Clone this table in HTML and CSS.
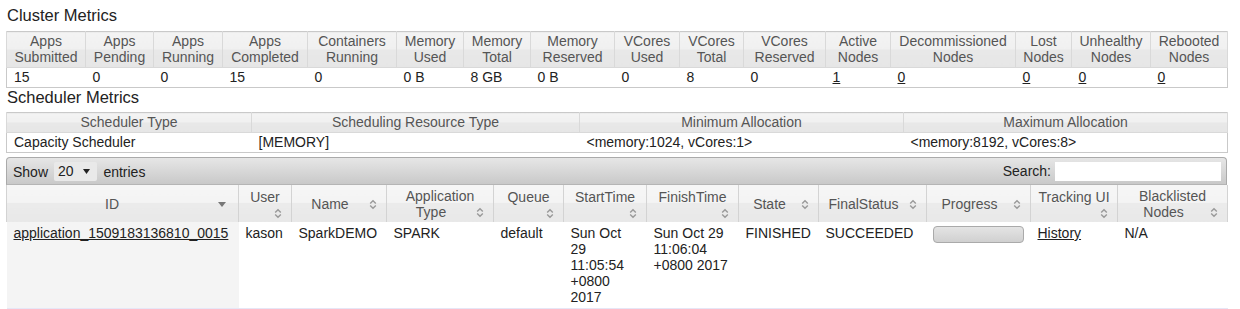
FILE: index.html
```html
<!DOCTYPE html>
<html>
<head>
<meta charset="utf-8">
<title>Applications</title>
<link rel="stylesheet" href="styles.css">
</head>
<body>
<div class="page">
  <h3 class="title title-cluster">Cluster Metrics</h3>
  <table class="info metrics">
    <colgroup>
      <col class="m1"><col class="m2"><col class="m3"><col class="m4"><col class="m5"><col class="m6"><col class="m7"><col class="m8"><col class="m9"><col class="m10"><col class="m11"><col class="m12"><col class="m13"><col class="m14"><col class="m15"><col class="m16">
    </colgroup>
    <thead>
      <tr>
        <th>Apps<br>Submitted</th><th>Apps<br>Pending</th><th>Apps<br>Running</th><th>Apps<br>Completed</th><th>Containers<br>Running</th><th>Memory<br>Used</th><th>Memory<br>Total</th><th>Memory<br>Reserved</th><th>VCores<br>Used</th><th>VCores<br>Total</th><th>VCores<br>Reserved</th><th>Active<br>Nodes</th><th>Decommissioned<br>Nodes</th><th>Lost<br>Nodes</th><th>Unhealthy<br>Nodes</th><th>Rebooted<br>Nodes</th>
      </tr>
    </thead>
    <tbody>
      <tr>
        <td>15</td><td>0</td><td>0</td><td>15</td><td>0</td><td>0 B</td><td>8 GB</td><td>0 B</td><td>0</td><td>8</td><td>0</td><td><a href="#">1</a></td><td><a href="#">0</a></td><td><a href="#">0</a></td><td><a href="#">0</a></td><td><a href="#">0</a></td>
      </tr>
    </tbody>
  </table>

  <h3 class="title title-sched">Scheduler Metrics</h3>
  <table class="info sched">
    <colgroup>
      <col class="s1"><col class="s2"><col class="s3"><col class="s4">
    </colgroup>
    <thead>
      <tr><th>Scheduler Type</th><th>Scheduling Resource Type</th><th>Minimum Allocation</th><th>Maximum Allocation</th></tr>
    </thead>
    <tbody>
      <tr><td>Capacity Scheduler</td><td>[MEMORY]</td><td>&lt;memory:1024, vCores:1&gt;</td><td>&lt;memory:8192, vCores:8&gt;</td></tr>
    </tbody>
  </table>

  <div class="apps">
    <div class="toolbar">
      <div class="length">Show <span class="select">20 <svg class="caret" width="7" height="5" viewBox="0 0 7 5"><path d="M0 0H7L3.5 5Z" fill="#222"/></svg></span> entries</div>
      <label class="search">Search: <input type="text"></label>
    </div>
    <table class="apps-table">
      <colgroup>
        <col class="a1"><col class="a2"><col class="a3"><col class="a4"><col class="a5"><col class="a6"><col class="a7"><col class="a8"><col class="a9"><col class="a10"><col class="a11"><col class="a12">
      </colgroup>
      <thead>
        <tr>
          <th>ID<svg class="sort sort-desc" width="8" height="5" viewBox="0 0 8 5"><path d="M0 0H8L4 5Z" fill="#777"/></svg></th>
          <th>User<svg class="sort" width="8" height="11" viewBox="0 0 8 11"><path d="M1.2 4.6 4 1.8 6.8 4.6M1.2 6.4 4 9.2 6.8 6.4" fill="none" stroke="#999" stroke-width="1.4"/></svg></th>
          <th>Name<svg class="sort" width="8" height="11" viewBox="0 0 8 11"><path d="M1.2 4.6 4 1.8 6.8 4.6M1.2 6.4 4 9.2 6.8 6.4" fill="none" stroke="#999" stroke-width="1.4"/></svg></th>
          <th>Application Type<svg class="sort" width="8" height="11" viewBox="0 0 8 11"><path d="M1.2 4.6 4 1.8 6.8 4.6M1.2 6.4 4 9.2 6.8 6.4" fill="none" stroke="#999" stroke-width="1.4"/></svg></th>
          <th>Queue<svg class="sort" width="8" height="11" viewBox="0 0 8 11"><path d="M1.2 4.6 4 1.8 6.8 4.6M1.2 6.4 4 9.2 6.8 6.4" fill="none" stroke="#999" stroke-width="1.4"/></svg></th>
          <th>StartTime<svg class="sort" width="8" height="11" viewBox="0 0 8 11"><path d="M1.2 4.6 4 1.8 6.8 4.6M1.2 6.4 4 9.2 6.8 6.4" fill="none" stroke="#999" stroke-width="1.4"/></svg></th>
          <th>FinishTime<svg class="sort" width="8" height="11" viewBox="0 0 8 11"><path d="M1.2 4.6 4 1.8 6.8 4.6M1.2 6.4 4 9.2 6.8 6.4" fill="none" stroke="#999" stroke-width="1.4"/></svg></th>
          <th>State<svg class="sort" width="8" height="11" viewBox="0 0 8 11"><path d="M1.2 4.6 4 1.8 6.8 4.6M1.2 6.4 4 9.2 6.8 6.4" fill="none" stroke="#999" stroke-width="1.4"/></svg></th>
          <th>FinalStatus<svg class="sort" width="8" height="11" viewBox="0 0 8 11"><path d="M1.2 4.6 4 1.8 6.8 4.6M1.2 6.4 4 9.2 6.8 6.4" fill="none" stroke="#999" stroke-width="1.4"/></svg></th>
          <th>Progress<svg class="sort" width="8" height="11" viewBox="0 0 8 11"><path d="M1.2 4.6 4 1.8 6.8 4.6M1.2 6.4 4 9.2 6.8 6.4" fill="none" stroke="#999" stroke-width="1.4"/></svg></th>
          <th>Tracking UI<svg class="sort" width="8" height="11" viewBox="0 0 8 11"><path d="M1.2 4.6 4 1.8 6.8 4.6M1.2 6.4 4 9.2 6.8 6.4" fill="none" stroke="#999" stroke-width="1.4"/></svg></th>
          <th>Blacklisted Nodes<svg class="sort" width="8" height="11" viewBox="0 0 8 11"><path d="M1.2 4.6 4 1.8 6.8 4.6M1.2 6.4 4 9.2 6.8 6.4" fill="none" stroke="#999" stroke-width="1.4"/></svg></th>
        </tr>
      </thead>
      <tbody>
        <tr>
          <td class="sorted"><a href="#">application_1509183136810_0015</a></td>
          <td>kason</td>
          <td>SparkDEMO</td>
          <td>SPARK</td>
          <td>default</td>
          <td>Sun Oct 29 11:05:54 +0800 2017</td>
          <td>Sun Oct 29 11:06:04 +0800 2017</td>
          <td>FINISHED</td>
          <td>SUCCEEDED</td>
          <td><div class="progress"></div></td>
          <td><a href="#">History</a></td>
          <td>N/A</td>
        </tr>
      </tbody>
    </table>
  </div>
</div>
</body>
</html>
```

FILE: styles.css
```css
* { box-sizing: border-box; }

body {
  margin: 0;
  background: #fff;
  color: #222;
  font-family: "Liberation Sans", Arial, sans-serif;
  font-size: 14px;
}

.page {
  padding: 6px 13px 0 6px;
}

.title {
  margin: 0 0 0 1px;
  font-size: 16.5px;
  font-weight: normal;
  line-height: 19px;
  color: #222;
}

.title-cluster { margin-bottom: 6px; }
.title-sched { margin-top: 0; margin-bottom: 5px; }

table {
  width: 100%;
  border-collapse: collapse;
  table-layout: fixed;
}

a { color: #222; text-decoration: underline; }

/* metrics tables */
.info {
  border: 1px solid #c9c9c9;
}

.info th {
  padding: 1px 2px 2px;
  font-weight: normal;
  color: #555;
  line-height: 16px;
  text-align: center;
  background: linear-gradient(#f3f3f3 0, #f0f0f0 50%, #e8e8e8 50%, #e6e6e6 100%);
  border-left: 1px solid #d9d9d9;
  border-right: 1px solid #d9d9d9;
  border-bottom: 1px solid #d9d9d9;
}

.info td {
  padding: 1px 7px 2px;
  line-height: 16px;
  text-align: left;
  white-space: nowrap;
}

.metrics .m1 { width: 79px; }
.metrics .m2 { width: 68px; }
.metrics .m3 { width: 69px; }
.metrics .m4 { width: 85px; }
.metrics .m5 { width: 89px; }
.metrics .m6 { width: 67px; }
.metrics .m7 { width: 67px; }
.metrics .m8 { width: 84px; }
.metrics .m9 { width: 65px; }
.metrics .m10 { width: 64px; }
.metrics .m11 { width: 82px; }
.metrics .m12 { width: 65px; }
.metrics .m13 { width: 125px; }
.metrics .m14 { width: 56px; }
.metrics .m15 { width: 79px; }
.metrics .m16 { width: 77px; }

.sched .s1 { width: 245px; }
.sched .s2 { width: 328px; }
.sched .s3 { width: 324px; }
.sched .s4 { width: 324px; }

/* applications datatable */
.apps { margin-top: 4px; }

.toolbar {
  display: flex;
  justify-content: space-between;
  align-items: center;
  height: 28px;
  padding: 0 5px 0 6px;
  border: 1px solid #aaa;
  border-bottom-color: #b5b5b5;
  border-radius: 4px 4px 0 0;
  background: linear-gradient(#e6e6e6, #c9c9c9);
  color: #222;
}

.select {
  display: inline-flex;
  align-items: center;
  gap: 9px;
  height: 19px;
  margin: 0 3px 0 2px;
  padding: 0 7px 0 4px;
  background: #e9e9e9;
  border-radius: 2px;
}

.caret { display: block; }

.search {
  display: flex;
  align-items: center;
}

.search input {
  width: 166px;
  height: 19px;
  margin-left: 4px;
  border: none;
  background: #fff;
  font: inherit;
}

.apps-table .a1 { width: 232px; }
.apps-table .a2 { width: 53px; }
.apps-table .a3 { width: 95px; }
.apps-table .a4 { width: 107px; }
.apps-table .a5 { width: 70px; }
.apps-table .a6 { width: 83px; }
.apps-table .a7 { width: 92px; }
.apps-table .a8 { width: 80px; }
.apps-table .a9 { width: 108px; }
.apps-table .a10 { width: 104px; }
.apps-table .a11 { width: 87px; }
.apps-table .a12 { width: 110px; }

.apps-table th {
  padding: 2px 5px;
  height: 37px;
  font-weight: normal;
  color: #555;
  line-height: 16px;
  text-align: center;
  vertical-align: middle;
  background: linear-gradient(#f6f6f6 0, #f3f3f3 50%, #ebebeb 50%, #e8e8e8 100%);
  border-left: 1px solid #d3d3d3;
  border-right: 1px solid #d3d3d3;
}

.sort {
  float: right;
  margin: 3px 4px 0 6px;
}

.sort-desc {
  margin-top: 6px;
  margin-right: 7px;
}

.apps-table td {
  padding: 3px 7px;
  line-height: 16px;
  vertical-align: top;
  text-align: left;
  border-bottom: 1px solid #e6e6f6;
}

.apps-table td.sorted {
  background: #f4f4f4;
}

.progress {
  width: 91px;
  height: 17px;
  margin-top: 1px;
  margin-left: -1px;
  border: 1px solid #aaa;
  border-radius: 4px;
  background: linear-gradient(#e4e4e4, #d0d0d0);
}
```
